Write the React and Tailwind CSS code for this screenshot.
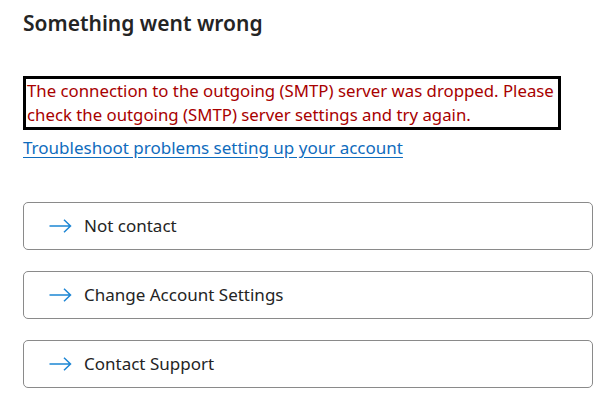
import React from 'react'

const ArrowIcon = () => (
  <svg width="23" height="14" viewBox="0 0 23 14" fill="none" className="shrink-0">
    <path d="M0.5 7H21.5M15 0.8L21.5 7L15 13.2" stroke="#1d86d4" strokeWidth="1.5" strokeLinejoin="miter" />
  </svg>
)

const actions = ['Not contact', 'Change Account Settings', 'Contact Support']

const App = () => {
  return (
    <div className="w-[610px] h-[405px] overflow-hidden bg-white pl-[23px] pr-[17px] pt-[9px] font-['Noto_Sans',sans-serif]">
      <h1 className="text-[21px] leading-[28px] font-semibold text-[#242424]">Something went wrong</h1>

      <div className="mt-[39px] w-[538px] border-[3px] border-black pl-[1px] py-0 text-[16.8px] leading-[24px] text-[#a80000] whitespace-nowrap">
        The connection to the outgoing (SMTP) server was dropped. Please
        <br />
        check the outgoing (SMTP) server settings and try again.
      </div>

      <a href="#" className="block mt-[6px] text-[17px] leading-[24px] text-[#0f6cbd] underline underline-offset-[3px]">
        Troubleshoot problems setting up your account
      </a>

      <div className="mt-[42px] flex flex-col gap-[21px]">
        {actions.map((label) => (
          <div key={label} className="h-[48px] flex items-center gap-[12px] pl-[25px] border border-[#8a8a8a] rounded-[5px] text-[17px] text-[#242424]">
            <ArrowIcon />
            <span>{label}</span>
          </div>
        ))}
      </div>
    </div>
  )
}

export default App
